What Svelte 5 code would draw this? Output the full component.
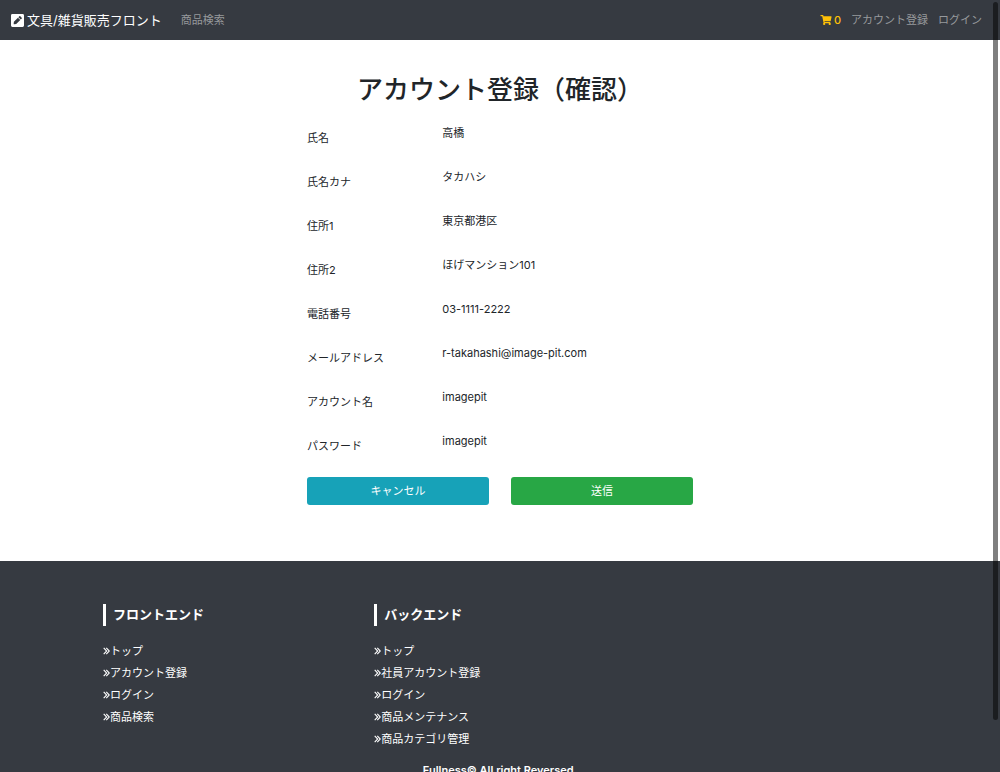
<script>
  const account = [
    ['氏名', '高橋'],
    ['氏名カナ', 'タカハシ'],
    ['住所1', '東京都港区'],
    ['住所2', 'ほげマンション101'],
    ['電話番号', '03-1111-2222'],
    ['メールアドレス', 'r-takahashi@image-pit.com'],
    ['アカウント名', 'imagepit'],
    ['パスワード', 'imagepit']
  ];
  const groups = [
    { title: 'フロントエンド', links: ['トップ', 'アカウント登録', 'ログイン', '商品検索'] },
    { title: 'バックエンド', links: ['トップ', '社員アカウント登録', 'ログイン', '商品メンテナンス', '商品カテゴリ管理'] }
  ];
</script>

<div class="page">
  <header>
    <a class="brand" href="#top">
      <svg class="pen" viewBox="0 0 448 448" aria-hidden="true">
        <path fill="currentColor" fill-rule="evenodd" d="M48 0H400A48 48 0 0 1 448 48V400A48 48 0 0 1 400 448H48A48 48 0 0 1 0 400V48A48 48 0 0 1 48 0ZM239 127L99 268L92 334Q91 356 113 355L180 348L320 208ZM368 125L322 79Q302 65 285 81L255 111L336 192L367 162Q383 144 368 125Z" />
      </svg>
      <span>文具/雑貨販売フロント</span>
    </a>
    <nav>
      <a href="#search">商品検索</a>
      <div class="user">
        <a class="cart" href="#cart">
          <svg viewBox="0 0 576 512" aria-hidden="true">
            <path fill="currentColor" d="M528 301L575 93A24 24 0 0 0 552 64H159L150 19A24 24 0 0 0 126 0H24A24 24 0 0 0 0 24V40A24 24 0 0 0 24 64H94L164 407A56 56 0 1 0 231 416H441A56 56 0 1 0 504 405L510 381A24 24 0 0 0 486 352H218L211 320H505A24 24 0 0 0 528 301Z" />
          </svg>
          <span>0</span>
        </a>
        <a href="#register">アカウント登録</a>
        <a href="#login">ログイン</a>
      </div>
    </nav>
  </header>

  <main>
    <h1>アカウント登録（確認）</h1>
    <form onsubmit={(e) => e.preventDefault()}>
      <dl>
        {#each account as [label, value]}
          <div class="row">
            <dt>{label}</dt>
            <dd>{value}</dd>
          </div>
        {/each}
      </dl>
      <div class="actions">
        <button type="button" class="cancel">キャンセル</button>
        <button type="submit" class="send">送信</button>
      </div>
    </form>
  </main>

  <footer>
    <div class="groups">
      {#each groups as group}
        <section>
          <h2>{group.title}</h2>
          <ul>
            {#each group.links as link}
              <li>
                <a href="#link">
                  <svg viewBox="0 0 7 8" aria-hidden="true">
                    <path d="M.7 .8L3.7 4L.7 7.2M3.3 .8L6.3 4L3.3 7.2" fill="none" stroke="currentColor" stroke-width="1.1" />
                  </svg>
                  <span>{link}</span>
                </a>
              </li>
            {/each}
          </ul>
        </section>
      {/each}
    </div>
    <p>Fullness© All right Reversed.</p>
  </footer>
  <div class="thumb"></div>
</div>

<style>
  :global(html) {
    scrollbar-width: none;
  }
  .page {
    font-family: Inter, "Noto Sans CJK JP", sans-serif;
    font-size: 11px;
    line-height: 16px;
    color: #212529;
    background: #fff;
  }
  a {
    color: inherit;
    text-decoration: none;
  }
  header {
    display: flex;
    align-items: center;
    min-height: 40px;
    padding: 0 18px 0 11px;
    background: #363a41;
    color: #96999c;
  }
  .brand {
    display: flex;
    align-items: center;
    gap: 3px;
    margin-right: 19px;
    font-size: 13px;
    line-height: 20px;
    color: #fff;
  }
  .pen {
    width: 13px;
    height: 13px;
  }
  nav,
  .user {
    display: flex;
    align-items: center;
  }
  nav {
    flex: 1;
    justify-content: space-between;
  }
  .user {
    gap: 10px;
  }
  .cart {
    display: flex;
    align-items: center;
    gap: 2px;
    font-weight: 500;
    color: #ffc107;
  }
  .cart svg {
    width: 12px;
    height: 10px;
  }
  main {
    padding: 32px 0 56px;
  }
  h1 {
    margin: 0;
    font-size: 26px;
    line-height: 36px;
    font-weight: 500;
    text-align: center;
  }
  form {
    max-width: 406px;
    margin: 0 auto;
  }
  dl {
    margin: 0;
    padding-top: 17px;
  }
  .row {
    display: grid;
    grid-template-columns: 1fr 2fr;
    min-height: 44px;
  }
  dt,
  dd {
    margin: 0;
    padding: 0 10px;
  }
  dt {
    padding-top: 5px;
  }
  .actions {
    display: grid;
    grid-template-columns: 1fr 1fr;
    gap: 22px;
    padding: 0 10px;
  }
  button {
    height: 28px;
    padding: 0;
    border: 0;
    border-radius: 3px;
    font: inherit;
    color: #fff;
  }
  .cancel {
    background: #17a2b8;
  }
  .send {
    background: #28a745;
  }
  footer {
    padding: 43px 0 32px;
    background: #363a41;
    color: #fff;
  }
  .groups {
    display: grid;
    grid-template-columns: repeat(3, 1fr);
    max-width: 814px;
    margin: 0 auto;
  }
  section {
    padding: 0 10px;
  }
  h2 {
    margin: 0 0 14px;
    padding-left: 7px;
    border-left: 3px solid #fff;
    font-size: 13px;
    line-height: 20px;
    font-weight: 700;
    padding-bottom: 2px;
  }
  ul {
    margin: 0;
    padding: 0;
    list-style: none;
  }
  li {
    padding: 3px 0;
    line-height: 16px;
  }
  li a {
    display: flex;
    align-items: center;
  }
  li svg {
    width: 7px;
    height: 8px;
  }
  footer p {
    margin: 12px 0 0;
    line-height: 16px;
    font-weight: 600;
    text-align: center;
  }
  .thumb {
    position: fixed;
    top: 2px;
    right: 2px;
    width: 5px;
    height: 93%;
    border-radius: 3px;
    background: rgba(0, 0, 0, 0.5);
    pointer-events: none;
  }
</style>
